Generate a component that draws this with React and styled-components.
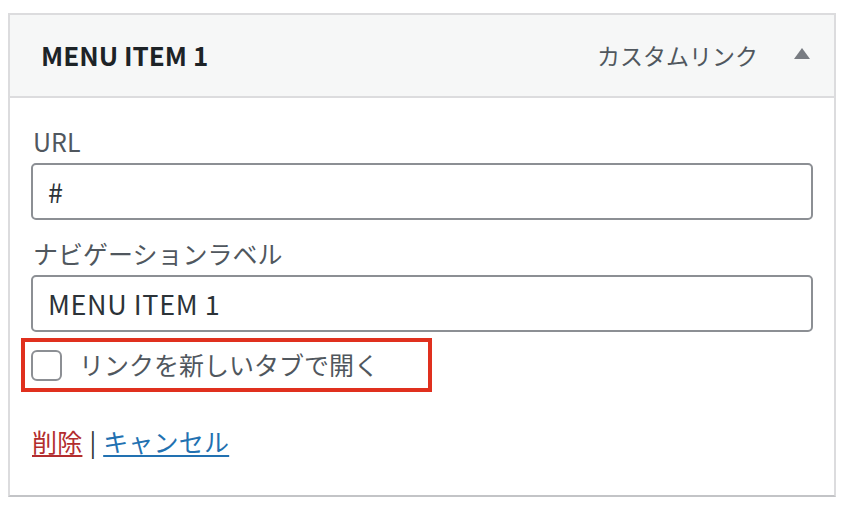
import React from "react";
import styled, { createGlobalStyle } from "styled-components";

const GlobalStyle = createGlobalStyle`
  body {
    margin: 0;
    background: #ffffff;
    font-family: "Noto Sans CJK JP", "Noto Sans", sans-serif;
  }
`;

const Page = styled.div`
  padding: 13px 8px 10px 8px;
`;

const Panel = styled.div`
  border: 2px solid #dcdcde;
  border-bottom-color: #c3c4c7;
  background: #ffffff;
  width: 828px;
  box-sizing: border-box;
`;

const Header = styled.div`
  display: flex;
  align-items: center;
  height: 81px;
  padding: 0 24px 0 31px;
  background: #f6f7f7;
  border-bottom: 2px solid #dcdcde;
`;

const Title = styled.span`
  flex: 1;
  font-size: 26px;
  font-weight: 700;
  color: #1d2327;
  margin-top: -2px;
`;

const TypeLabel = styled.span`
  font-size: 23px;
  color: #50575e;
  margin-right: 36px;
  margin-top: -2px;
`;

const Arrow = styled.span`
  width: 0;
  height: 0;
  border-left: 8px solid transparent;
  border-right: 8px solid transparent;
  border-bottom: 11px solid #787c82;
  margin-top: -4px;
`;

const Body = styled.div`
  padding: 28px 21px 36px 21px;
  display: flex;
  flex-direction: column;
`;

const Field = styled.div`
  display: flex;
  flex-direction: column;
  margin-bottom: ${(p) => p.$gap || 0}px;
`;

const FieldLabel = styled.label`
  font-size: 25px;
  color: #50575e;
  line-height: 30px;
  margin: 0 0 7px 2px;
`;

const Input = styled.div`
  height: 57px;
  box-sizing: border-box;
  border: 2px solid #8c8f94;
  border-radius: 5px;
  display: flex;
  align-items: center;
  padding: 0 15px;
  font-size: 27px;
  letter-spacing: 0.6px;
  color: #2c3338;
`;

const Highlight = styled.div`
  align-self: flex-start;
  display: flex;
  align-items: center;
  gap: 17px;
  width: 411px;
  height: 54px;
  box-sizing: border-box;
  border: 4px solid #e0301e;
  margin: 6px 0 0 -10px;
  padding-left: 6px;
`;

const Box = styled.span`
  width: 31px;
  height: 31px;
  box-sizing: border-box;
  border: 2px solid #8c8f94;
  border-radius: 6px;
  background: #ffffff;
`;

const CheckText = styled.span`
  font-size: 25px;
  color: #50575e;
  margin-top: -2px;
`;

const Actions = styled.div`
  margin-top: 31px;
  display: flex;
  align-items: center;
  font-size: 25px;
  line-height: 36px;
  color: #2c3338;
  margin-left: 1px;
`;

const Link = styled.a`
  color: ${(p) => p.$color};
  text-decoration: underline;
  text-underline-offset: 3px;
  text-decoration-thickness: 2px;
  letter-spacing: 0.2px;
`;

const Sep = styled.span`
  margin: 0 7px;
`;

export default function App() {
  return (
    <Page>
      <GlobalStyle />
      <Panel>
        <Header>
          <Title>MENU ITEM 1</Title>
          <TypeLabel>カスタムリンク</TypeLabel>
          <Arrow />
        </Header>
        <Body>
          <Field $gap={18}>
            <FieldLabel>URL</FieldLabel>
            <Input>#</Input>
          </Field>
          <Field>
            <FieldLabel>ナビゲーションラベル</FieldLabel>
            <Input>MENU ITEM 1</Input>
          </Field>
          <Highlight>
            <Box />
            <CheckText>リンクを新しいタブで開く</CheckText>
          </Highlight>
          <Actions>
            <Link $color="#b32d2e">削除</Link>
            <Sep>|</Sep>
            <Link $color="#2271b1">キャンセル</Link>
          </Actions>
        </Body>
      </Panel>
    </Page>
  );
}
